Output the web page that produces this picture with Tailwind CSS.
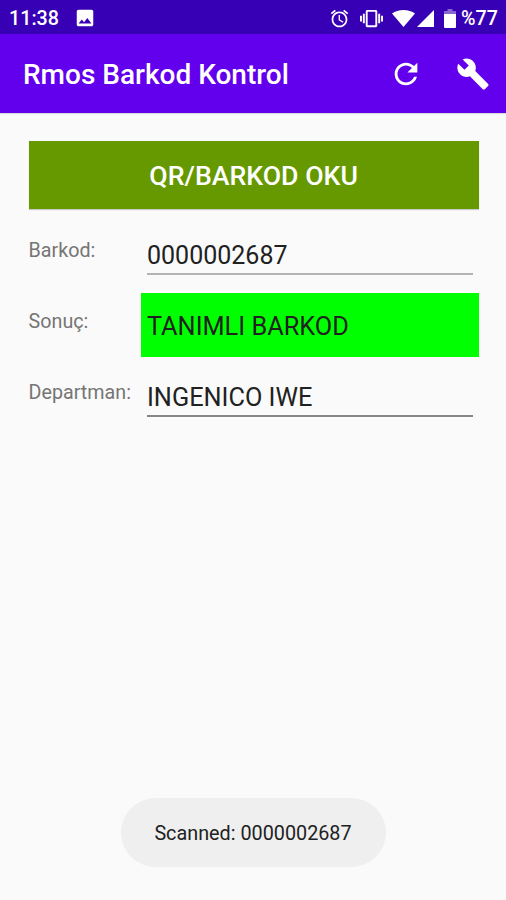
<!DOCTYPE html>
<html lang="tr">

<head>
    <meta charset="UTF-8">
    <meta name="viewport" content="width=device-width, initial-scale=1.0">
    <script src="https://cdn.jsdelivr.net/npm/@tailwindcss/browser@4"></script>
    <title>Rmos Barkod Kontrol</title>
</head>

<body class="bg-[#fafafa] font-[Roboto,sans-serif] text-[#212121]">
    <div class="flex flex-col h-[900px] w-[506px] overflow-hidden">
        <!-- status bar -->
        <div class="flex items-center h-[34px] shrink-0 bg-[#3800b4] text-white pl-[9px] pr-2 pt-0.5">
            <span class="pt-0.5 text-[19.7px] leading-none font-medium">11:38</span>
            <svg class="ml-[15px] w-[22px] h-[22px]" viewBox="0 0 24 24" fill="#fff">
                <path d="M21 19V5c0-1.1-.9-2-2-2H5c-1.1 0-2 .9-2 2v14c0 1.1.9 2 2 2h14c1.1 0 2-.9 2-2zM8.500 13.500l2.500 3.010L14.500 12l4.500 6H5l3.500-4.500z" />
            </svg>
            <div class="ml-auto flex items-center">
                <svg class="w-[21px] h-[21px]" viewBox="0 0 24 24" fill="#fff">
                    <path d="M22 5.720l-4.600-3.860-1.290 1.530 4.600 3.860L22 5.720zM7.880 3.390L6.600 1.860 2 5.710l1.290 1.530 4.590-3.850zM12.500 8H11v6l4.750 2.850.75-1.230-4-2.370V8zM12 4c-4.970 0-9 4.030-9 9s4.020 9 9 9c4.970 0 9-4.030 9-9s-4.030-9-9-9zm0 16c-3.870 0-7-3.130-7-7s3.130-7 7-7 7 3.130 7 7-3.130 7-7 7z" />
                </svg>
                <svg class="ml-[10px] w-[23px] h-[23px]" viewBox="0 0 24 24" fill="#fff">
                    <path d="M0 15h2V9H0v6zm3 2h2V7H3v10zm19-8v6h2V9h-2zm-3 8h2V7h-2v10zM16.500 3h-9C6.670 3 6 3.670 6 4.500v15c0 .83.67 1.500 1.500 1.500h9c.83 0 1.500-.67 1.500-1.500v-15c0-.83-.67-1.500-1.500-1.500zM16 19H8V5h8v14z" />
                </svg>
                <svg class="ml-[9px] w-[23px] h-[17px]" viewBox="0 0 23 17" fill="#fff">
                    <path d="M11.500 17L0 3.600C3 1.300 7 0 11.500 0S20 1.300 23 3.600z" />
                </svg>
                <svg class="ml-[2px] w-[17px] h-[17px]" viewBox="0 0 17 17" fill="#fff">
                    <path d="M0 17L17 0v17z" />
                </svg>
                <svg class="ml-[10px] w-[12px] h-[19px]" viewBox="0 0 12 19" fill="#fff">
                    <path d="M3.500 0h5v2H12v3H0V2h3.500z" opacity=".4" />
                    <path d="M0 5h12v13q0 1-1 1H1q-1 0-1-1z" />
                </svg>
                <span class="ml-[5.5px] pt-0.5 text-[19.7px] leading-none font-medium">%77</span>
            </div>
        </div>

        <!-- app bar -->
        <div class="flex items-center h-[79px] shrink-0 bg-[#6200ee] text-white pl-[23px] pr-4 shadow-[0_1px_1px_rgba(0,0,0,0.12)]">
            <h1 class="pt-0.5 text-[28px] leading-none font-medium">Rmos Barkod Kontrol</h1>
            <svg class="ml-auto w-[34px] h-[34px]" viewBox="0 0 24 24" fill="#fff">
                <path d="M17.650 6.350C16.200 4.900 14.210 4 12 4c-4.420 0-7.990 3.580-7.990 8s3.570 8 7.990 8c3.730 0 6.840-2.550 7.730-6h-2.080c-.82 2.330-3.040 4-5.650 4-3.310 0-6-2.690-6-6s2.690-6 6-6c1.660 0 3.140.69 4.220 1.780L13 11h7V4l-2.350 2.350z" />
            </svg>
            <svg class="ml-[33px] w-[34px] h-[34px]" viewBox="0 0 24 24" fill="#fff">
                <path d="M22.700 19l-9.100-9.100c.9-2.300.4-5-1.500-6.900-2-2-5-2.400-7.400-1.300L9 6 6 9 1.600 4.700C.4 7.100.9 10.100 2.900 12.100c1.900 1.900 4.600 2.400 6.900 1.500l9.100 9.100c.4.4 1 .4 1.400 0l2.300-2.300c.5-.4.5-1.100.1-1.400z" />
            </svg>
        </div>

        <div class="flex flex-col pt-7 pl-[28.6px] pr-[27.4px]">
            <button class="h-[68px] pt-0.5 bg-[#669900] text-white text-[26.7px] font-medium shadow-[0_1px_1px_rgba(0,0,0,0.2)]">QR/BARKOD OKU</button>

            <div class="grid grid-cols-[112.4px_1fr] mt-[20px]">
                <label class="text-[19.7px] leading-6 pt-[10px] text-[#757575]">Barkod:</label>
                <div class="mx-[6px] h-[46px] pt-[10px] text-[25px] leading-[34px] border-b-2 border-[#b4b4b4]">0000002687</div>
            </div>

            <div class="grid grid-cols-[112.4px_1fr] mt-[18px]">
                <label class="text-[19.7px] leading-6 pt-[17px] text-[#757575]">Sonuç:</label>
                <div class="h-[64px] pl-[6px] text-[25.3px] leading-[68px] bg-[#00ff00]">TANIMLI BARKOD</div>
            </div>

            <div class="grid grid-cols-[112.4px_1fr] mt-[14px]">
                <label class="text-[19.7px] leading-6 pt-[10px] text-[#757575]">Departman:</label>
                <div class="mx-[6px] h-[46px] pt-[10px] text-[25.3px] leading-[34px] border-b-2 border-[#858585]">INGENICO IWE</div>
            </div>
        </div>

        <!-- toast -->
        <div class="mt-auto mb-[33px] self-center h-[69px] w-[265px] rounded-full bg-[#efefef] text-[19.8px] leading-[71px] text-center">Scanned: 0000002687</div>
    </div>
</body>

</html>
